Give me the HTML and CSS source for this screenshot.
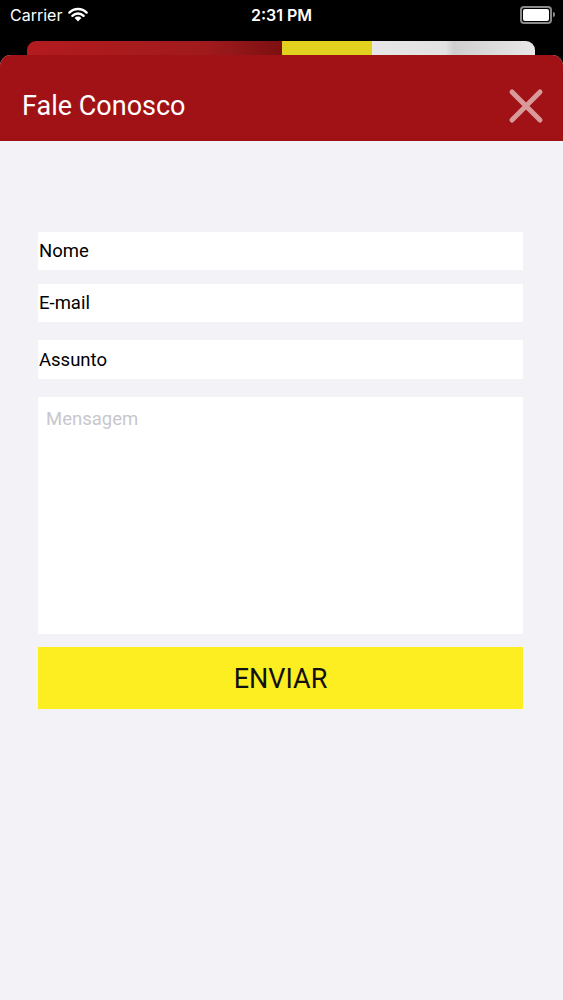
FILE: index.html
```html
<!DOCTYPE html>
<html lang="pt">
<head>
    <meta charset="UTF-8">
    <meta name="viewport" content="width=device-width, initial-scale=1.0">
    <title>Fale Conosco</title>
    <link rel="stylesheet" href="styles.css">
</head>
<body>
    <div class="status-bar">
        <div class="carrier">
            Carrier
            <svg class="wifi" width="20" height="15" viewBox="0 0 20 15">
                <path d="M10 14.5 L6.6 11 A4.8 4.8 0 0 1 13.4 11 Z" fill="#fff"/>
                <path d="M4.4 8.8 A7.9 7.9 0 0 1 15.6 8.8" stroke="#fff" stroke-width="2.4" fill="none" stroke-linecap="round"/>
                <path d="M1.4 5.6 A12.2 12.2 0 0 1 18.6 5.6" stroke="#fff" stroke-width="2.4" fill="none" stroke-linecap="round"/>
            </svg>
        </div>
        <div class="time">2:31 PM</div>
        <div class="battery"><div class="battery-level"></div></div>
    </div>

    <div class="behind-card">
        <div class="bc-red"></div>
        <div class="bc-yellow"></div>
        <div class="bc-grey"></div>
    </div>

    <div class="modal">
        <div class="modal-header">
            <h1>Fale Conosco</h1>
            <svg class="close" width="36" height="36" viewBox="0 0 36 36">
                <path d="M4 4 L32 32 M32 4 L4 32" stroke="#d99a9c" stroke-width="5" stroke-linecap="round"/>
            </svg>
        </div>
        <form class="contact-form">
            <div class="field f-nome">Nome</div>
            <div class="field f-email">E-mail</div>
            <div class="field f-assunto">Assunto</div>
            <div class="field message">Mensagem</div>
            <button type="button" class="send">ENVIAR</button>
        </form>
    </div>
</body>
</html>
```

FILE: styles.css
```css
body {
    margin: 0;
    background: #000;
    font-family: Roboto, "Liberation Sans", sans-serif;
    width: 563px;
    height: 1000px;
    overflow: hidden;
}
.status-bar {
    height: 30px;
    display: flex;
    align-items: center;
    justify-content: space-between;
    padding: 0 10px;
    color: #fff;
    font-family: Inter, "Liberation Sans", sans-serif;
    position: relative;
}
.carrier {
    display: flex;
    align-items: center;
    gap: 6px;
    font-size: 16px;
}
.wifi {
    margin-top: -2px;
}
.time {
    position: absolute;
    left: 0;
    right: 0;
    text-align: center;
    font-size: 16px;
    font-weight: 600;
}
.battery {
    width: 26px;
    height: 12px;
    border: 2px solid #8a8a8a;
    border-radius: 4px;
    padding: 1px;
    margin-right: 1px;
    position: relative;
}
.battery::after {
    content: "";
    position: absolute;
    right: -5px;
    top: 4px;
    width: 2px;
    height: 5px;
    background: #8a8a8a;
    border-radius: 0 2px 2px 0;
}
.battery-level {
    width: 100%;
    height: 100%;
    background: #fff;
    border-radius: 2px;
}
.behind-card {
    margin: 11px 28px 0 27px;
    height: 30px;
    border-radius: 9px 9px 0 0;
    overflow: hidden;
    display: flex;
}
.bc-red {
    width: 255px;
    background: linear-gradient(90deg, #b31b1f 0%, #a01a1c 70%, #7c1012 100%);
}
.bc-yellow {
    width: 90px;
    background: #e2d11f;
}
.bc-grey {
    flex: 1;
    background: linear-gradient(90deg, #e6e6e6 0%, #e2e2e2 45%, #cfcfcf 50%, #e8e8e8 100%);
}
.modal {
    margin-top: -16px;
    background: #f2f2f7;
    border-radius: 11px 11px 0 0;
    overflow: hidden;
    height: 945px;
    position: relative;
}
.modal-header {
    background: #a01215;
    height: 86px;
    display: flex;
    align-items: center;
    justify-content: space-between;
    padding: 0 19px 0 22px;
}
.modal-header h1 {
    margin: 16px 0 0;
    color: #fff;
    font-size: 27px;
    font-weight: 400;
}
.close {
    margin-top: 16px;
}
.contact-form {
    padding: 91px 40px 0 38px;
    display: flex;
    flex-direction: column;
}
.field {
    background: #fff;
    height: 38px;
    display: flex;
    align-items: center;
    padding-left: 1px;
    font-size: 18.5px;
    color: #000;
    box-sizing: border-box;
}
.f-nome {
    padding-bottom: 1px;
}
.f-email {
    margin-top: 14px;
    padding-bottom: 1px;
}
.f-assunto {
    margin-top: 18px;
    height: 39px;
}
.message {
    margin-top: 18px;
    height: 237px;
    align-items: flex-start;
    padding: 11px 0 0 8px;
    color: #c7c7cd;
}
.send {
    margin-top: 13px;
    height: 62px;
    border: none;
    background: #fcee21;
    color: #111;
    font-family: Roboto, "Liberation Sans", sans-serif;
    font-size: 27px;
    padding: 2px 0 0;
}
```
